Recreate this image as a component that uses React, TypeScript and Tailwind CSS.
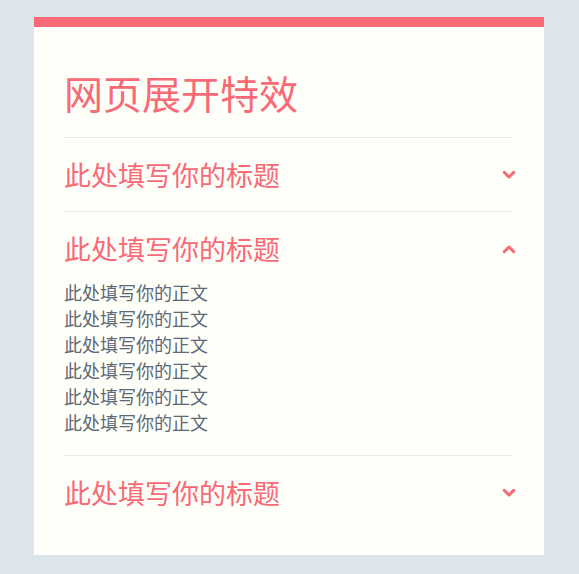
import { useState } from 'react';

const items = [
  { title: '此处填写你的标题', body: Array(6).fill('此处填写你的正文') },
  { title: '此处填写你的标题', body: Array(6).fill('此处填写你的正文') },
  { title: '此处填写你的标题', body: Array(6).fill('此处填写你的正文') },
];

function Chevron({ up }: { up: boolean }) {
  return (
    <svg width="14" height="14" viewBox="0 0 14 14" className="-mr-[4px] shrink-0">
      <path
        d={up ? 'M2.3 9.6 L7 5 L11.7 9.6' : 'M2.3 4.4 L7 9 L11.7 4.4'}
        fill="none"
        stroke="#f76a76"
        strokeWidth="3"
        strokeLinecap="round"
        strokeLinejoin="round"
      />
    </svg>
  );
}

export default function App() {
  const [open, setOpen] = useState(1);

  return (
    <div
      className="min-h-[574px] bg-[#dbe5ea] pt-[17px] px-[34px]"
      style={{ fontFamily: '"Noto Sans CJK SC", "Noto Sans", sans-serif' }}
    >
      <div className="w-[510px] bg-[#fffffa] border-t-[10px] border-[#f76a76] pl-[30px] pr-[32px] pt-[42px] pb-[26px]">
        <h1 className="text-[39px] leading-[46px] text-[#f76a76] mb-[22px]">网页展开特效</h1>

        {items.map((item, i) => {
          const isOpen = open === i;
          return (
            <div key={i} className="border-t border-[#ebebe6]">
              <button
                onClick={() => setOpen(isOpen ? -1 : i)}
                className={`w-full flex items-center justify-between pt-[17px] text-left ${isOpen ? 'pb-[10px]' : 'pb-[16px]'}`}
              >
                <span className="text-[27px] leading-[40px] text-[#f76a76]">{item.title}</span>
                <Chevron up={isOpen} />
              </button>
              {isOpen && (
                <div className="pb-[20px]">
                  {item.body.map((line, j) => (
                    <p key={j} className="text-[18px] leading-[26px] text-[#5d6874]">
                      {line}
                    </p>
                  ))}
                </div>
              )}
            </div>
          );
        })}
      </div>
    </div>
  );
}
